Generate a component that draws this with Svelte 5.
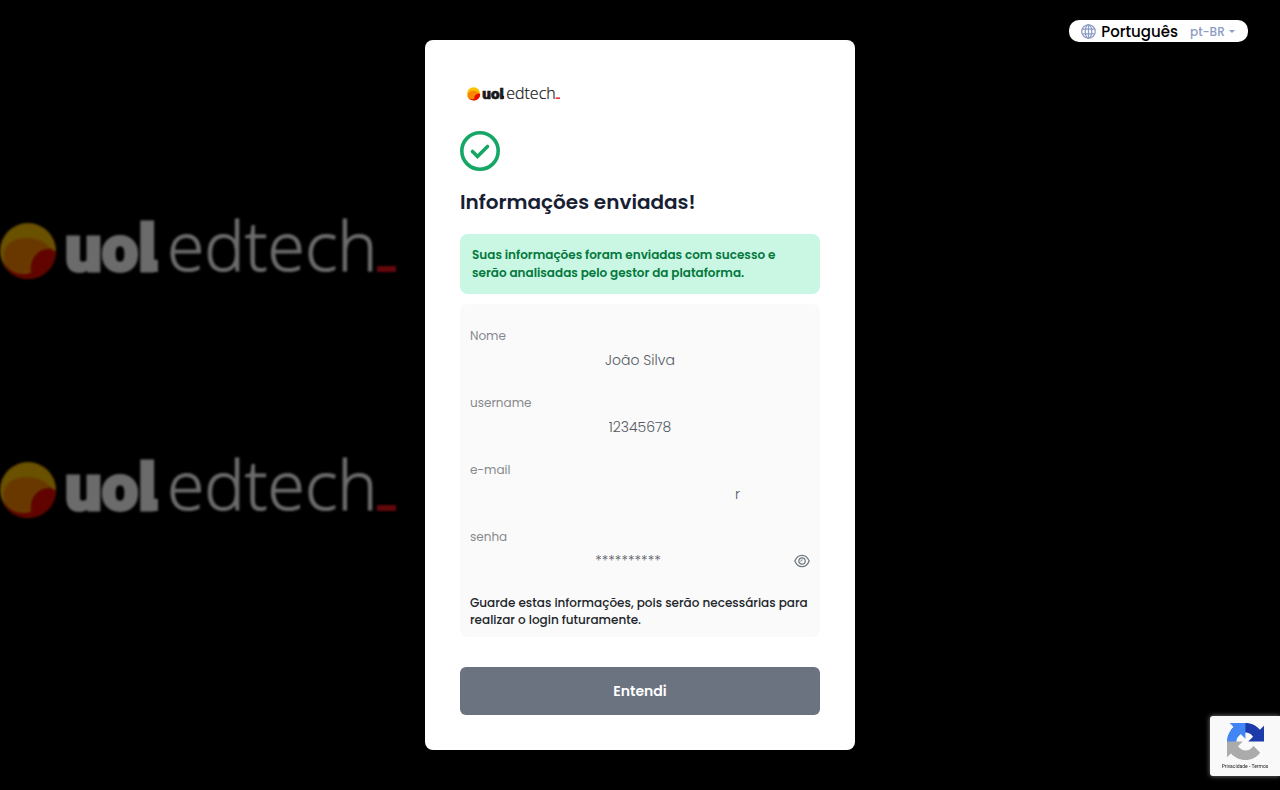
<script>
    const fields = [
        { label: "Nome", value: "João Silva" },
        { label: "username", value: "12345678" },
        { label: "e-mail", value: "r", trailing: true },
    ];
    const password = "senha12345";

    let language = $state("pt-BR");
    let showPassword = $state(false);
</script>

{#snippet logo(color)}
    <svg class="logo" viewBox="0 -15 400 110" role="img" aria-label="UOL edtech">
        <circle cx="28" cy="40" r="28" fill="#fcc000" />
        <path d="M2 48C8 62 20 64 30 62L54 40L56 40C56 56 44 68 28 68C15 68 5 60 2 48Z" fill="#e60a00" />
        <path d="M5 52C0 36 12 27 26 27C39 27 47 32 51 38C39 35 27 46 30 61C18 63 9 60 5 52Z" fill="#f98500" />
        <path d="M52 38C38 36 28 48 31 62C44 62 56 54 55 41Z" fill="#e60a00" />
        <text class="uol" x="65" y="60" fill={color} stroke={color}>uol</text>
        <path d="M144 46H152Q152 49 158 49V61H150Q144 60 144 54Z" fill={color} />
        <text class="edtech" x="167" y="60" fill={color} stroke={color}>edtech</text>
        <rect x="377" y="55" width="19" height="6" fill="#f0141c" />
    </svg>
{/snippet}

<main>
    <div class="backdrop" aria-hidden="true">
        {@render logo("#ffffff")}
        {@render logo("#ffffff")}
    </div>

    <section class="card">
        <div class="brand">{@render logo("#1a1a1a")}</div>
        <svg class="check" viewBox="0 0 40 40" fill="none" stroke="#16a765" aria-hidden="true">
            <circle cx="20" cy="20" r="18.200" stroke-width="3.600" />
            <path d="M12.500 20.500L17.500 25.500L27.500 15.500" stroke-width="3.600" stroke-linecap="round" />
        </svg>
        <h1>Informações enviadas!</h1>
        <p class="alert">
            Suas informações foram enviadas com sucesso e serão analisadas pelo gestor da plataforma.
        </p>

        <div class="info">
            <dl>
                {#each fields as field (field.label)}
                    <div class="field">
                        <dt>{field.label}</dt>
                        <dd><span class:trailing={field.trailing}>{field.value}</span></dd>
                    </div>
                {/each}
                <div class="field">
                    <dt>senha</dt>
                    <dd>
                        <span class="password">{showPassword ? password : "*".repeat(password.length)}</span>
                        <button
                            type="button"
                            class="eye"
                            aria-label="Mostrar senha"
                            aria-pressed={showPassword}
                            onclick={() => (showPassword = !showPassword)}
                        >
                            <svg viewBox="0 0 16 14" fill="none" stroke="#6c757d" stroke-width="1.2">
                                <path d="M.8 7C4 -.6 12 -.6 15.200 7C12 14.600 4 14.600 .8 7Z" />
                                <circle cx="8" cy="7" r="3.200" />
                                <path d="M6.300 7.200A1.500 1.500 0 0 0 8 5.400" stroke-width="1" />
                            </svg>
                        </button>
                    </dd>
                </div>
            </dl>
            <p class="note">Guarde estas informações, pois serão necessárias para realizar o login futuramente.</p>
        </div>

        <button type="button" class="confirm">Entendi</button>
    </section>

    <div class="language">
        <svg class="globe" viewBox="0 0 16 16" fill="none" stroke="#8c9dc4" stroke-width="1.3" aria-hidden="true">
            <circle cx="8" cy="8" r="7.200" />
            <ellipse cx="8" cy="8" rx="3.500" ry="7.200" />
            <path d="M8 .8V15.200M1 5.500H15M1 10.500H15" />
        </svg>
        <label for="language">Português</label>
        <select id="language" bind:value={language}>
            <option value="pt-BR">pt-BR</option>
            <option value="en-US">en-US</option>
            <option value="es-ES">es-ES</option>
        </select>
        <svg class="caret" viewBox="0 0 6 3" fill="#8c9dc4" aria-hidden="true"><path d="M0 0H6L3 3Z" /></svg>
    </div>
</main>

<aside class="recaptcha">
    <svg viewBox="0 0 64 64" aria-hidden="true">
        <path fill="#1c3aa9" d="M64 31.955l-.033-1.370V4.687l-7.160 7.160C50.948 4.674 42.033.093 32.050.093c-10.400 0-19.622 4.960-25.458 12.640l11.736 11.860a15.550 15.550 0 0 1 4.754-5.334c2.050-1.600 4.952-2.906 8.968-2.906.485 0 .860.057 1.135.163 4.976.393 9.288 3.140 11.828 7.124l-8.307 8.307L64 31.953" />
        <path fill="#4285f4" d="M31.862.094l-1.370.033H4.594l7.160 7.160C4.580 13.147 0 22.060 0 32.046c0 10.400 4.960 19.622 12.640 25.458L24.500 45.768a15.550 15.550 0 0 1-5.334-4.754c-1.600-2.050-2.906-4.952-2.906-8.968 0-.485.057-.860.163-1.135.393-4.976 3.140-9.288 7.124-11.828l8.307 8.307L31.860.095" />
        <path fill="#ababab" d="M.001 32.045l.033 1.370v25.898l7.160-7.160c5.860 7.173 14.774 11.754 24.760 11.754 10.400 0 19.622-4.960 25.458-12.640l-11.736-11.860a15.550 15.550 0 0 1-4.754 5.334c-2.050 1.600-4.952 2.906-8.968 2.906-.485 0-.860-.057-1.135-.163-4.976-.393-9.288-3.140-11.828-7.124l8.307-8.307c-10.522.040-22.400.066-27.295-.005" />
    </svg>
    <p><a href="#privacidade">Privacidade</a> - <a href="#termos">Termos</a></p>
</aside>

<style>
    :global(body) {
        margin: 0;
        background: #000;
        font-family: Poppins, Inter, "Open Sans", sans-serif;
    }
    main {
        display: grid;
        grid-template-columns: 1fr minmax(0, 430px) 1fr;
        align-items: start;
        min-height: 100vh;
    }
    h1, p, dl, dd {
        margin: 0;
    }
    button, select {
        font-family: inherit;
        border: none;
        cursor: pointer;
    }
    svg {
        display: block;
        flex: none;
    }

    .logo {
        width: 100%;
    }
    .uol {
        font-family: Roboto, sans-serif;
        font-size: 65px;
        font-weight: 900;
        stroke-width: 3px;
    }
    .edtech {
        font-family: "Open Sans", sans-serif;
        font-size: 68px;
        font-weight: 300;
        stroke-width: 1px;
    }
    .backdrop {
        display: flex;
        flex-direction: column;
        gap: 129px;
        max-width: 400px;
        padding-top: 196px;
        opacity: 0.42;
        filter: blur(1px);
    }

    .card {
        box-sizing: border-box;
        margin: 40px 0;
        padding: 41px 35px 35px;
        background: #fff;
        border-radius: 8px;
    }
    .brand {
        width: 94px;
        padding-left: 7px;
    }
    .check {
        width: 40px;
        height: 40px;
        margin-top: 24px;
    }
    h1 {
        margin-top: 16px;
        color: #172033;
        font-size: 20px;
        font-weight: 600;
        line-height: 30px;
    }
    .alert {
        margin-top: 17px;
        padding: 12px;
        background: #c9f7e3;
        border-radius: 8px;
        color: #04783d;
        font-size: 12px;
        font-weight: 600;
        line-height: 18px;
    }

    .info {
        margin-top: 10px;
        padding: 11px 10px 9px;
        background: #fafafa;
        border-radius: 8px;
    }
    .field {
        padding: 12px 0 7px;
    }
    dt {
        color: #86898d;
        font-size: 12px;
        line-height: 18px;
    }
    dd {
        display: flex;
        align-items: center;
        justify-content: center;
        color: #54595f;
        font-size: 14px;
        font-weight: 300;
        line-height: 30px;
    }
    .trailing {
        min-width: 200px;
        text-align: right;
    }
    .password {
        flex: 1;
        text-align: center;
    }
    .eye {
        padding: 0 0 0 8px;
        background: none;
    }
    .eye svg {
        width: 16px;
        height: 14px;
    }
    .note {
        margin-top: 11px;
        color: #212529;
        font-size: 12px;
        font-weight: 500;
        line-height: 17px;
    }
    .confirm {
        width: 100%;
        height: 48px;
        margin-top: 30px;
        padding: 2px 0 0;
        background: #6b7280;
        border-radius: 6px;
        color: #fff;
        font-size: 14px;
        font-weight: 600;
    }

    .language {
        display: flex;
        align-items: center;
        justify-self: end;
        height: 22px;
        margin: 20px 32px 0 0;
        padding: 0 13px 0 12px;
        background: #fff;
        border-radius: 10px;
    }
    .globe {
        width: 15px;
        height: 15px;
        margin-right: 5px;
    }
    .language label {
        color: #000;
        font-size: 15px;
        font-weight: 500;
    }
    .language select {
        margin-left: 12px;
        padding: 0;
        appearance: none;
        background: none;
        color: #8c9dc4;
        font-size: 12px;
        font-weight: 500;
    }
    .caret {
        width: 6px;
        height: 3px;
        margin-left: 1px;
    }

    .recaptcha {
        position: fixed;
        right: 0;
        bottom: 14px;
        display: flex;
        flex-direction: column;
        align-items: center;
        gap: 2px;
        box-sizing: border-box;
        width: 70px;
        height: 60px;
        padding-top: 7px;
        background: #f9f9f9;
        border-radius: 3px 0 0 3px;
        box-shadow: 0 0 5px #808080;
    }
    .recaptcha svg {
        width: 37px;
        height: 37px;
    }
    .recaptcha p {
        color: #222;
        font-family: Roboto, sans-serif;
        font-size: 5px;
        line-height: 8px;
    }
    .recaptcha a {
        color: inherit;
        text-decoration: none;
    }
</style>
